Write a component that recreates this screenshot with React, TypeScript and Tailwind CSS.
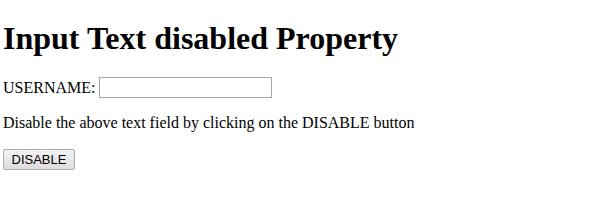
export default function App() {
  return (
    <div className="min-h-[216px] w-[599px] bg-white pl-[3px] pt-[20px] font-['Liberation_Serif','Times_New_Roman',serif] text-black">
      <h1 className="m-0 text-[32px] font-bold leading-[36px]">Input Text disabled Property</h1>
      <div className="mt-[21px] flex items-center text-[16px] leading-[18px]">
        <span>USERNAME:</span>
        <input type="text" className="ml-[4px] h-[21px] w-[173px] border border-[#a9a9a9] bg-white px-[2px] outline-none" />
      </div>
      <p className="mt-[16px] text-[16px] leading-[18px]">
        Disable the above text field by clicking on the DISABLE button
      </p>
      <button
        type="button"
        className="mt-[17px] h-[21px] w-[72px] rounded-[2px] border border-[#adadad] bg-gradient-to-b from-[#f2f2f2] to-[#dddddd] font-['Liberation_Sans',Arial,sans-serif] text-[13px] leading-[19px] text-black"
      >
        DISABLE
      </button>
    </div>
  );
}
